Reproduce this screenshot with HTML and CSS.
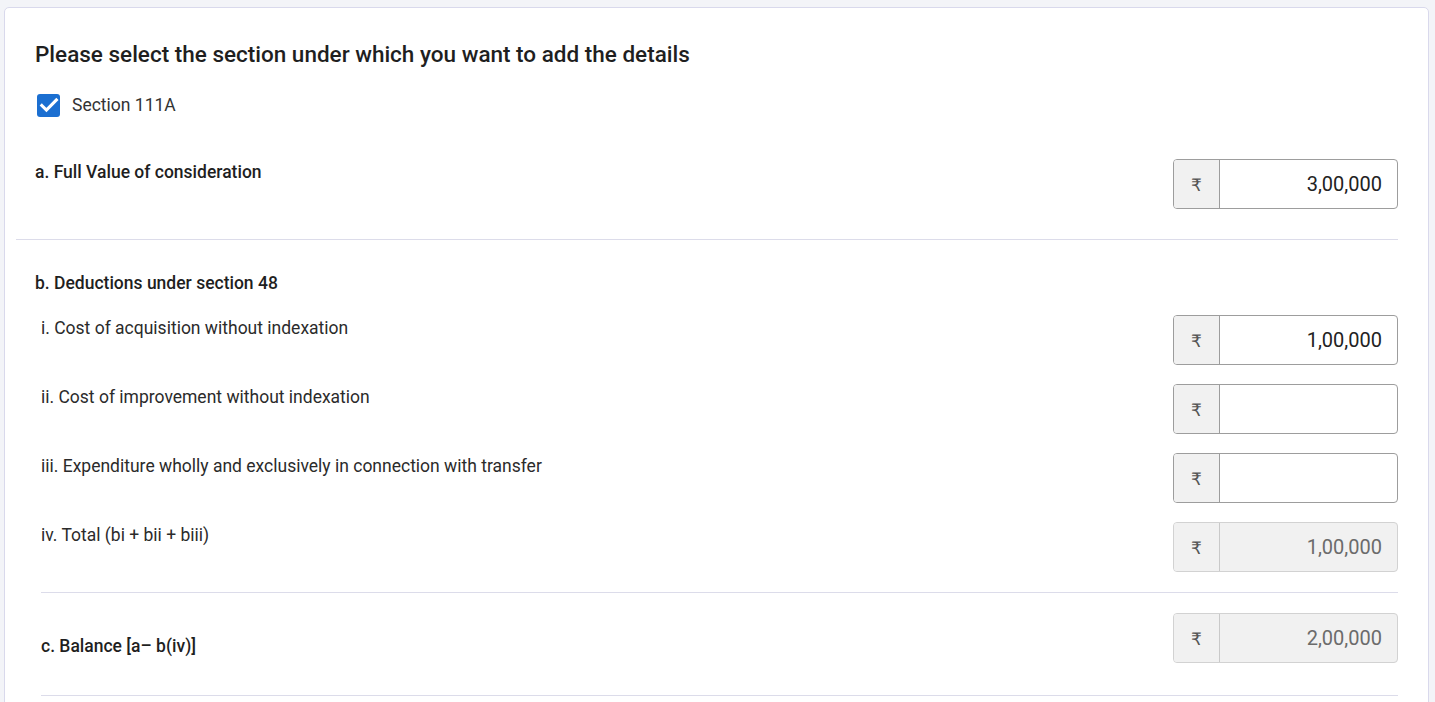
FILE: index.html
```html
<!DOCTYPE html>
<html lang="en">
<head>
    <meta charset="UTF-8">
    <meta name="viewport" content="width=device-width, initial-scale=1.0">
    <title>Capital Gains - Section 111A</title>
    <link rel="stylesheet" href="styles.css">
</head>
<body>
    <div class="card">
        <h2 class="title">Please select the section under which you want to add the details</h2>

        <label class="check">
            <span class="check-box">
                <svg width="22" height="22" viewBox="0 0 24 24"><path d="M4.2 12.6l5 5L20 6.6" fill="none" stroke="#fff" stroke-width="3.4" stroke-linecap="square" stroke-linejoin="miter"/></svg>
            </span>
            Section 111A
        </label>

        <!-- a. full value -->
        <div class="block-a">
            <div class="row">
                <div class="label strong">a. Full Value of consideration</div>
                <div class="amount">
                    <span class="prefix">₹</span>
                    <input class="value" type="text" value="3,00,000">
                </div>
            </div>
        </div>

        <hr class="divider wide">

        <!-- b. deductions -->
        <div class="block-b">
            <div class="label strong">b. Deductions under section 48</div>
            <div class="sub-rows">
                <div class="row">
                    <div class="label">i. Cost of acquisition without indexation</div>
                    <div class="amount">
                        <span class="prefix">₹</span>
                        <input class="value" type="text" value="1,00,000">
                    </div>
                </div>
                <div class="row">
                    <div class="label">ii. Cost of improvement without indexation</div>
                    <div class="amount">
                        <span class="prefix">₹</span>
                        <input class="value" type="text" value="">
                    </div>
                </div>
                <div class="row">
                    <div class="label">iii. Expenditure wholly and exclusively in connection with transfer</div>
                    <div class="amount">
                        <span class="prefix">₹</span>
                        <input class="value" type="text" value="">
                    </div>
                </div>
                <div class="row">
                    <div class="label">iv. Total (bi + bii + biii)</div>
                    <div class="amount disabled">
                        <span class="prefix">₹</span>
                        <input class="value" type="text" value="1,00,000" disabled>
                    </div>
                </div>
            </div>
        </div>

        <hr class="divider">

        <!-- c. balance -->
        <div class="block-c">
            <div class="row">
                <div class="label strong low">c. Balance [a– b(iv)]</div>
                <div class="amount disabled">
                    <span class="prefix">₹</span>
                    <input class="value" type="text" value="2,00,000" disabled>
                </div>
            </div>
        </div>

        <hr class="divider last">
    </div>
</body>
</html>
```

FILE: styles.css
```css
body {
    font-family: Roboto, "Noto Sans", Arial, sans-serif;
    background-color: #f3f4f8;
    margin: 0;
    padding: 0;
    color: #222;
}

.card {
    margin: 7px 6px 0 4px;
    padding: 30px 30px 40px 11px;
    background-color: #fff;
    border: 1px solid #d9d9ec;
    border-radius: 5px;
}

.title {
    margin: 0 0 0 19px;
    font-size: 22.5px;
    font-weight: 500;
    line-height: 32px;
    color: #1f1f1f;
}

.check {
    display: flex;
    align-items: center;
    gap: 12px;
    margin: 23px 0 0 21px;
    font-size: 17.5px;
    line-height: 24px;
    color: #333;
}

.check-box {
    width: 23px;
    height: 23px;
    border-radius: 3px;
    background-color: #1b6fd1;
    display: flex;
    align-items: center;
    justify-content: center;
}

.block-a {
    margin: 42px 0 0 19px;
}

.row {
    display: flex;
    justify-content: space-between;
    align-items: flex-start;
}

.label {
    font-size: 17.5px;
    line-height: 24px;
    padding-top: 1px;
    color: #2b2b2b;
}

.label.strong {
    font-weight: 500;
    color: #1f1f1f;
}

.label.low {
    padding-top: 21px;
}

.amount {
    display: flex;
    width: 225px;
    height: 50px;
    box-sizing: border-box;
    border: 1px solid #9d9d9d;
    border-radius: 4px;
    overflow: hidden;
    background-color: #fff;
}

.amount.disabled {
    border-color: #d2d2d2;
    background-color: #f1f1f1;
}

.prefix {
    width: 45px;
    flex: none;
    display: flex;
    align-items: center;
    justify-content: center;
    background-color: #f1f1f1;
    border-right: 1px solid #9d9d9d;
    font-family: "DejaVu Sans", "Noto Sans", sans-serif;
    font-size: 17px;
    color: #555;
    padding-top: 1px;
}

.amount.disabled .prefix {
    border-right-color: #c9c9c9;
}

.value {
    flex: 1;
    min-width: 0;
    border: none;
    outline: none;
    background: transparent;
    padding: 0 15px 0 0;
    text-align: right;
    font-family: Roboto, Arial, sans-serif;
    font-size: 20px;
    color: #222;
}

.value:disabled {
    color: #6b6b6b;
}

.divider {
    border: none;
    border-top: 1px solid #dcdcea;
    margin: 30px 0 0 25px;
}

.divider.wide {
    margin-left: 0;
}

.block-b {
    margin: 30px 0 0 19px;
}

.sub-rows {
    margin: 20px 0 0 6px;
    display: flex;
    flex-direction: column;
    gap: 19px;
}

.block-b + .divider {
    margin-top: 20px;
}

.block-c {
    margin: 20px 0 0 25px;
}

.divider.last {
    margin-top: 32px;
}
```
